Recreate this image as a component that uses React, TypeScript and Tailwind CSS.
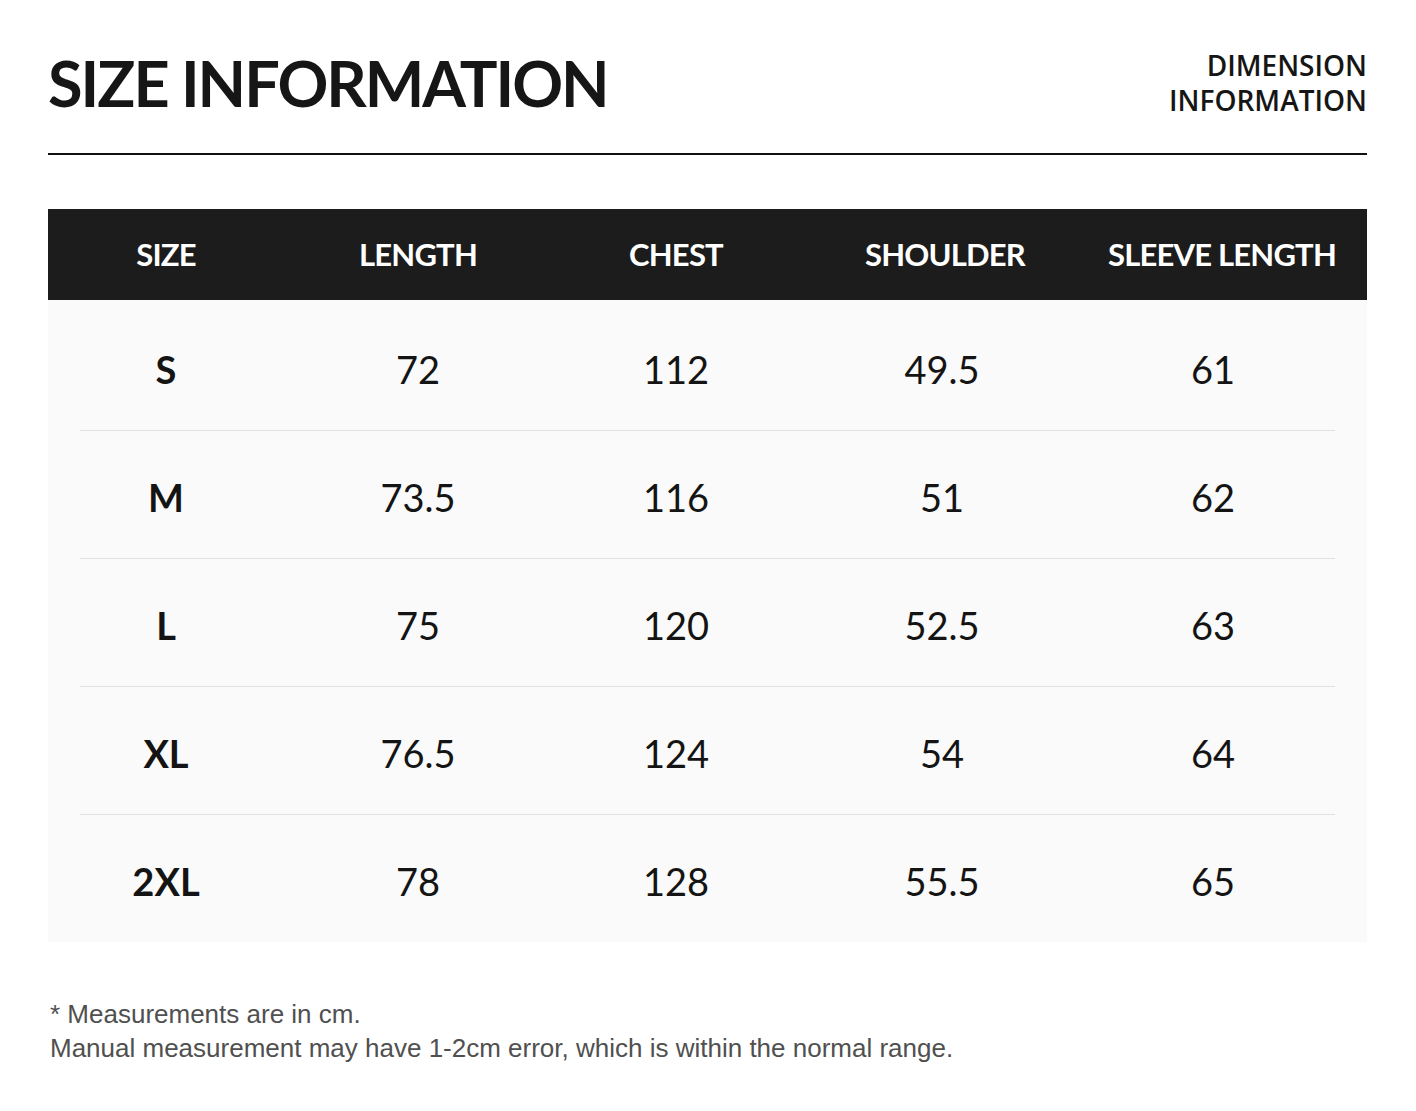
import React from "react";

const rows = [
  ["S", "72", "112", "49.5", "61"],
  ["M", "73.5", "116", "51", "62"],
  ["L", "75", "120", "52.5", "63"],
  ["XL", "76.5", "124", "54", "64"],
  ["2XL", "78", "128", "55.5", "65"],
];

const headers = ["SIZE", "LENGTH", "CHEST", "SHOULDER", "SLEEVE LENGTH"];

export default function App() {
  return (
    <div className="w-[1416px] h-[1111px] bg-white overflow-hidden" style={{ fontFamily: "Lato, 'Open Sans', sans-serif" }}>
      <div className="pl-[48px] pr-[49px]">
        <div className="flex items-start justify-between pt-[45px] h-[153px]">
          <h1 className="text-[63px] leading-[76px] font-bold text-[#161616] tracking-[-2px]">SIZE INFORMATION</h1>
          <div className="text-right text-[28px] leading-[35px] font-semibold text-[#161616] mt-[3px]" style={{ fontFamily: "'Open Sans', sans-serif" }}>
            <div>DIMENSION</div>
            <div>INFORMATION</div>
          </div>
        </div>
        <div className="h-[2px] bg-[#111]" />
        <div className="mt-[54px]">
          <div className="grid grid-cols-[236px_268px_248px_284px_283px] h-[91px] bg-[#1c1c1c] items-center">
            {headers.map((h, i) => (
              <div key={h} className={`flex justify-center text-white text-[31px] font-bold tracking-[-0.8px] ${i === 3 ? "pl-[6px]" : ""} ${i === 4 ? "pr-[7px]" : ""}`}>
                {h}
              </div>
            ))}
          </div>
          <div className="bg-[#fafafa]">
            {rows.map((r, ri) => (
              <div key={ri} className={ri === 0 ? "pt-[3px]" : ""}>
                <div className="grid grid-cols-[236px_268px_248px_284px_283px] h-[127px] pt-[6px] items-center">
                  {r.map((c, ci) => (
                    <div key={ci} className={`flex justify-center text-[#141414] text-[38px] ${ci === 0 ? "font-bold" : "font-normal"} ${ci === 4 ? "pr-[25px]" : ""}`}>
                      {c}
                    </div>
                  ))}
                </div>
                {ri < rows.length - 1 && <div className="mx-[32px] h-[1px] bg-[#e2e2e2]" />}
              </div>
            ))}
          </div>
        </div>
        <div className="mt-[55px] pl-[2px] text-[26px] leading-[34px] text-[#505050]" style={{ fontFamily: "'Liberation Sans', Arial, sans-serif" }}>
          <div>* Measurements are in cm.</div>
          <div>Manual measurement may have 1-2cm error, which is within the normal range.</div>
        </div>
      </div>
    </div>
  );
}
